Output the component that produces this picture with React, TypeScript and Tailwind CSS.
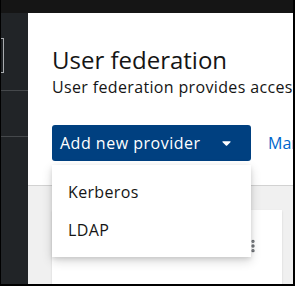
import { EllipsisVertical } from "lucide-react";

const font = { fontFamily: '"Open Sans", "Noto Sans", sans-serif' };

function Caret() {
    return (
        <svg viewBox="0 0 320 512" className="w-[9px] h-[14px] fill-white">
            <path d="M31.3 192h257.3c17.8 0 26.7 21.5 14.1 34.1L174.1 354.8c-7.8 7.8-20.5 7.8-28.3 0L17.2 226.1C4.6 213.5 13.5 192 31.3 192z" />
        </svg>
    );
}

export default function App() {
    return (
        <div className="w-[295px] h-[286px] overflow-hidden bg-black pl-px pr-[2px] pb-[2px] flex flex-col" style={font}>
            <div className="h-[13px] shrink-0 bg-[#151515]" />
            <div className="flex flex-1 min-h-0">
                {/* sidebar */}
                <div className="w-[27px] shrink-0 bg-[#212427] flex flex-col">
                    <div className="mt-[25px] h-[35px] w-[3px] border border-l-0 border-[#a9acaf]" />
                    <div className="mt-[17px] h-px bg-[#45484b]" />
                    <div className="mt-[45px] h-px bg-[#45484b]" />
                </div>

                {/* main */}
                <div className="flex-1 min-w-0 flex flex-col bg-[#f0f0f0] overflow-hidden">
                    <div className="bg-white border-b border-[#d2d2d2] pl-6 pt-[33px] pb-6 whitespace-nowrap">
                        <h1 className="text-[24px] leading-[1.2] text-[#151515] font-normal">User federation</h1>
                        <p className="text-[16px] leading-6 tracking-[0.35px] text-[#151515]">User federation provides access to users in external directories</p>
                        <div className="mt-[26px] flex items-center">
                            <div className="relative">
                                <button className="w-[199px] h-9 rounded-[3px] bg-[#004080] text-white text-[16px] tracking-[0.5px] pl-2 pr-[20px] flex items-center justify-between">
                                    <span>Add new provider</span>
                                    <Caret />
                                </button>
                                <div className="absolute left-0 top-10 z-10 w-[199px] bg-white py-2 shadow-[0_4px_10px_rgba(3,3,3,0.16),0_2px_4px_rgba(3,3,3,0.1)]">
                                    <div className="px-4 py-[7px] text-[16px] leading-6 tracking-[0.35px] text-[#151515]">Kerberos</div>
                                    <div className="px-4 py-[7px] text-[16px] leading-6 tracking-[0.35px] text-[#151515]">LDAP</div>
                                </div>
                            </div>
                            <a className="ml-[17px] text-[16px] text-[#06c]">Manage priorities</a>
                        </div>
                    </div>
                    <div className="pl-6 pt-6">
                        <div className="w-[230px] h-[120px] bg-white shadow-[0_1px_2px_rgba(3,3,3,0.12)] flex justify-end pr-[21px] pt-[28px]">
                            <EllipsisVertical className="w-4 h-4 text-[#6a6e73]" strokeWidth={3} />
                        </div>
                    </div>
                </div>
            </div>
        </div>
    );
}
